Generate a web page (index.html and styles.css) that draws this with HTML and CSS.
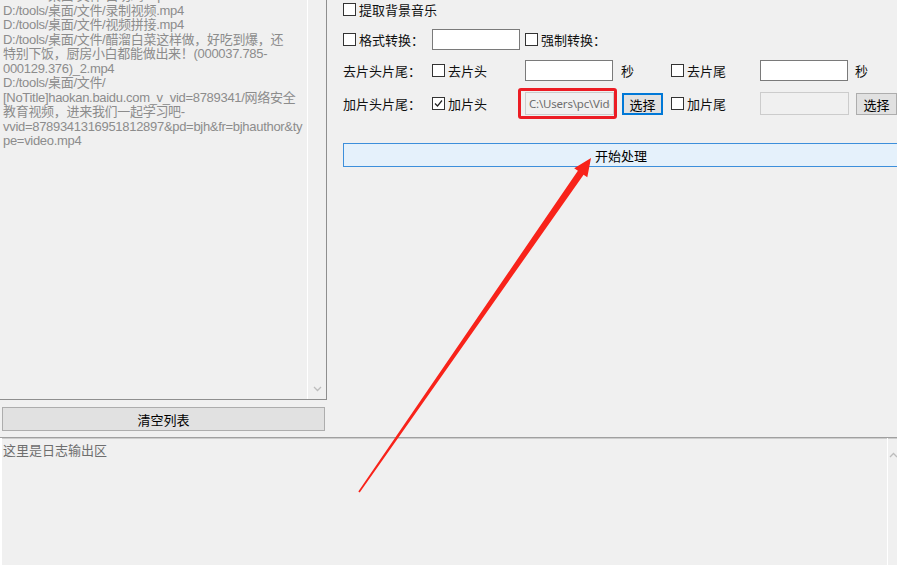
FILE: index.html
```html
<!DOCTYPE html>
<html>
<head>
    <title>视频处理工具</title>
    <link rel="stylesheet" href="styles.css">
</head>
<body>
    <div class="window">
        <div class="top">
            <div class="left">
                <div class="listbox">
                    <div class="list-items">
                        <div>D:/tools/桌面/文件/白切鸡.mp4</div>
                        <div>D:/tools/桌面/文件/录制视频.mp4</div>
                        <div>D:/tools/桌面/文件/视频拼接.mp4</div>
                        <div>D:/tools/桌面/文件/醋溜白菜这样做，好吃到爆，还<br>特别下饭，厨房小白都能做出来！(000037.785-<br>000129.376)_2.mp4</div>
                        <div>D:/tools/桌面/文件/<br>[NoTitle]haokan.baidu.com_v_vid=8789341/网络安全<br>教育视频，进来我们一起学习吧-<br>vvid=8789341316951812897&amp;pd=bjh&amp;fr=bjhauthor&amp;ty<br>pe=video.mp4</div>
                    </div>
                    <div class="vscroll">
                        <svg width="9" height="6" viewBox="0 0 9 6"><polyline points="1,1 4.5,4.5 8,1" fill="none" stroke="#bdbdbd" stroke-width="1.3"/></svg>
                    </div>
                </div>
                <button class="btn clear">清空列表</button>
            </div>

            <div class="right">
                <div class="opts">
                    <label class="cb-label row1"><span class="cb"></span>提取背景音乐</label>

                    <label class="cb-label"><span class="cb"></span>格式转换：</label>
                    <input class="tb" type="text">
                    <label class="cb-label span-rest"><span class="cb"></span>强制转换：</label>

                    <span class="lbl">去片头片尾：</span>
                    <label class="cb-label"><span class="cb"></span>去片头</label>
                    <input class="tb" type="text">
                    <span class="lbl">秒</span>
                    <label class="cb-label"><span class="cb"></span>去片尾</label>
                    <input class="tb" type="text">
                    <span class="lbl">秒</span>

                    <span class="lbl">加片头片尾：</span>
                    <label class="cb-label"><span class="cb checked"><svg width="11" height="11" viewBox="0 0 11 11"><polyline points="2,5.5 4.5,8 9,2.5" fill="none" stroke="#222" stroke-width="1.2"/></svg></span>加片头</label>
                    <div class="marked">
                        <input class="tb path" type="text" value="C:\Users\pc\Videos\head.mp4" disabled>
                        <span class="highlight"></span>
                    </div>
                    <button class="btn pick focused">选择</button>
                    <label class="cb-label"><span class="cb"></span>加片尾</label>
                    <input class="tb path" type="text" disabled>
                    <button class="btn pick">选择</button>
                </div>
                <button class="btn start">开始处理</button>
            </div>
        </div>

        <div class="log">
            <div class="log-text">这里是日志输出区</div>
            <div class="log-scroll">
                <svg width="9" height="6" viewBox="0 0 9 6"><polyline points="2,5 5.5,1.5 9,5" fill="none" stroke="#bdbdbd" stroke-width="1.3"/></svg>
            </div>
        </div>

        <!-- annotation arrow drawn over the screenshot -->
        <svg class="arrow" width="897" height="565" viewBox="0 0 897 565">
            <polygon points="359.7,492.5 583.6,174.8 587.3,177.3 591,158 574.2,168.2 577.9,170.8 358.3,491.5" fill="#f8231a"/>
        </svg>
    </div>
</body>
</html>
```

FILE: styles.css
```css
body {
    margin: 0;
    background: #f0f0f0;
    font-family: "Noto Sans CJK SC", "Noto Sans", sans-serif;
    font-size: 13px;
    color: #111;
    overflow: hidden;
}
.window {
    position: relative;
    width: 897px;
    height: 565px;
    overflow: hidden;
}
.top {
    display: flex;
    height: 437px;
}
.left {
    width: 327px;
    flex-shrink: 0;
    display: flex;
    flex-direction: column;
}
.listbox {
    height: 400px;
    box-sizing: border-box;
    border-right: 1px solid #8e8e8e;
    border-bottom: 1px solid #8e8e8e;
    display: flex;
    overflow: hidden;
}
.list-items {
    flex: 1;
    margin-top: -11px;
    padding-left: 3px;
    color: #8c8c8c;
    font-family: "Liberation Sans", "Noto Sans CJK SC", sans-serif;
    font-size: 13px;
    letter-spacing: -0.3px;
    line-height: 14.5px;
    white-space: nowrap;
    overflow: hidden;
}
.vscroll {
    width: 19px;
    flex-shrink: 0;
    box-sizing: border-box;
    border-left: 1px solid #fff;
    display: flex;
    align-items: flex-end;
    justify-content: center;
    padding-bottom: 7px;
}
.btn {
    font-family: inherit;
    font-size: 13px;
    color: #000;
    background: #e1e1e1;
    border: 1px solid #adadad;
    padding: 0;
    line-height: 1;
    box-sizing: border-box;
}
.clear {
    margin: 7px 0 0 2px;
    width: 323px;
    height: 24px;
}
.right {
    flex: 1;
    min-width: 0;
    padding-left: 16px;
}
.opts {
    display: grid;
    grid-template-columns: 89px 93px 96px 50px 89px 95px auto;
    grid-template-rows: 19px 21px 21px 24px;
    row-gap: 10px;
    align-items: center;
}
.row1 {
    grid-column: 1 / -1;
}
.span-rest {
    grid-column: 3 / -1;
}
.cb-label {
    display: inline-flex;
    align-items: center;
    gap: 3px;
    line-height: 1;
}
.lbl {
    line-height: 1;
}
.cb {
    width: 13px;
    height: 13px;
    box-sizing: border-box;
    border: 1px solid #333;
    background: #fff;
    display: inline-flex;
    align-items: center;
    justify-content: center;
}
.tb {
    box-sizing: border-box;
    width: 88px;
    height: 21px;
    border: 1px solid #7a7a7a;
    background: #fff;
    margin: 0;
    padding: 0 3px;
    font-family: "Noto Sans", sans-serif;
    font-size: 12px;
    outline: none;
}
.tb.path {
    width: 89px;
    height: 23px;
    border-color: #cccccc;
    background: #f0f0f0;
    color: #6d6d6d;
    font-size: 11.5px;
    letter-spacing: -0.2px;
}
.marked {
    position: relative;
    display: flex;
    justify-self: start;
}
.highlight {
    position: absolute;
    top: -4px;
    bottom: -4px;
    left: -7px;
    right: -3px;
    border: 3px solid #ec1c24;
    border-radius: 3px;
}
.pick {
    width: 41px;
    height: 22px;
    margin-top: 2px;
    margin-left: 1px;
}
.pick.focused {
    border: 2px solid #0078d7;
}
.start {
    margin-top: 28px;
    width: 556px;
    height: 24px;
    background: #e5f1fb;
    border-color: #3d8fdb;
}
.log {
    height: 128px;
    box-sizing: border-box;
    border-top: 1px solid #a0a0a0;
    box-shadow: inset 0 1px 0 #cdcdcd;
    display: flex;
}
.log-text {
    flex: 1;
    border-left: 2px solid #fff;
    padding: 4px 0 0 1px;
    line-height: 16px;
    color: #6e6e6e;
}
.log-scroll {
    width: 9px;
    flex-shrink: 0;
    border-left: 1px solid #fff;
    padding-top: 5px;
}
.arrow {
    position: absolute;
    top: 0;
    left: 0;
    pointer-events: none;
}
```
